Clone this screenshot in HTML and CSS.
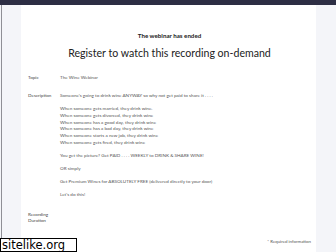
FILE: index.html
```html
<!DOCTYPE html>
<html>
<head>
<meta charset="utf-8">
<link rel="stylesheet" href="styles.css">
</head>
<body>
<div class="topbar"></div>
<div class="page">
  <div class="card">
    <div class="ended">The webinar has ended</div>
    <h1 class="title">Register to watch this recording on-demand</h1>
    <div class="row topic">
      <div class="label">Topic</div>
      <div class="value">The Wine Webinar</div>
    </div>
    <div class="row desc">
      <div class="label">Description</div>
      <div class="value">
        <p>Someone's going to drink wine ANYWAY so why not get paid to share it . . . .</p>
        <p>When someone gets married, they drink wine.<br>When someone gets divorced, they drink wine<br>When someone has a good day, they drink wine<br>When someone has a bad day, they drink wine<br>When someone starts a new job, they drink wine<br>When someone gets fired, they drink wine</p>
        <p>You get the picture? Get PAID . . . . WEEKLY to DRINK &amp; SHARE WINE!</p>
        <p>OR simply</p>
        <p>Get Premium Wines for ABSOLUTELY FREE (delivered directly to your door)</p>
        <p>Let's do this!</p>
      </div>
    </div>
    <div class="row rec">
      <div class="label">Recording<br>Duration</div>
      <div class="value"></div>
    </div>
    <div class="required">* Required information</div>
  </div>
</div>
<div class="watermark">sitelike.org</div>
</body>
</html>
```
FILE: styles.css
```css
html, body {
  margin: 0;
  padding: 0;
  height: 100%;
  overflow: hidden;
}
body {
  background: #f4f5f9;
  font-family: Lato, "Noto Sans", sans-serif;
  color: #333;
  position: relative;
}
.topbar {
  height: 5px;
  background: #2d2e44;
}
.page {
  border-left: 1px solid #8f8f96;
  margin-left: 1px;
  padding: 0 20px 0 19px;
  height: 247px;
}
.card {
  background: #fff;
  height: 100%;
  box-sizing: border-box;
  padding-top: 27px;
  padding-left: 7px;
  padding-right: 5px;
}
.ended {
  text-align: center;
  font-size: 6.2px;
  font-weight: 700;
  color: #222;
  line-height: 8px;
}
.title {
  margin: 7px 0 0 0;
  text-align: center;
  font-size: 10.6px;
  font-weight: 400;
  color: #222;
  line-height: 13px;
}
.row {
  display: flex;
  font-size: 4.6px;
  line-height: 6.7px;
}
.label {
  width: 32px;
  flex: none;
  color: #444;
}
.value {
  color: #555;
}
.topic {
  margin-top: 14px;
}
.desc {
  margin-top: 11.5px;
}
.desc p {
  margin: 0 0 6.4px 0;
}
.rec {
  margin-top: 6.5px;
}
.required {
  text-align: right;
  font-size: 4.4px;
  line-height: 6px;
  color: #555;
  margin-top: 15px;
}
.watermark {
  position: absolute;
  left: 0;
  bottom: 0;
  width: 74px;
  height: 12px;
  border: 1px solid #000;
  background: #fff;
  font-family: "DejaVu Sans", sans-serif;
  font-size: 11.5px;
  line-height: 12px;
  color: #000;
  padding-left: 1px;
}
```
